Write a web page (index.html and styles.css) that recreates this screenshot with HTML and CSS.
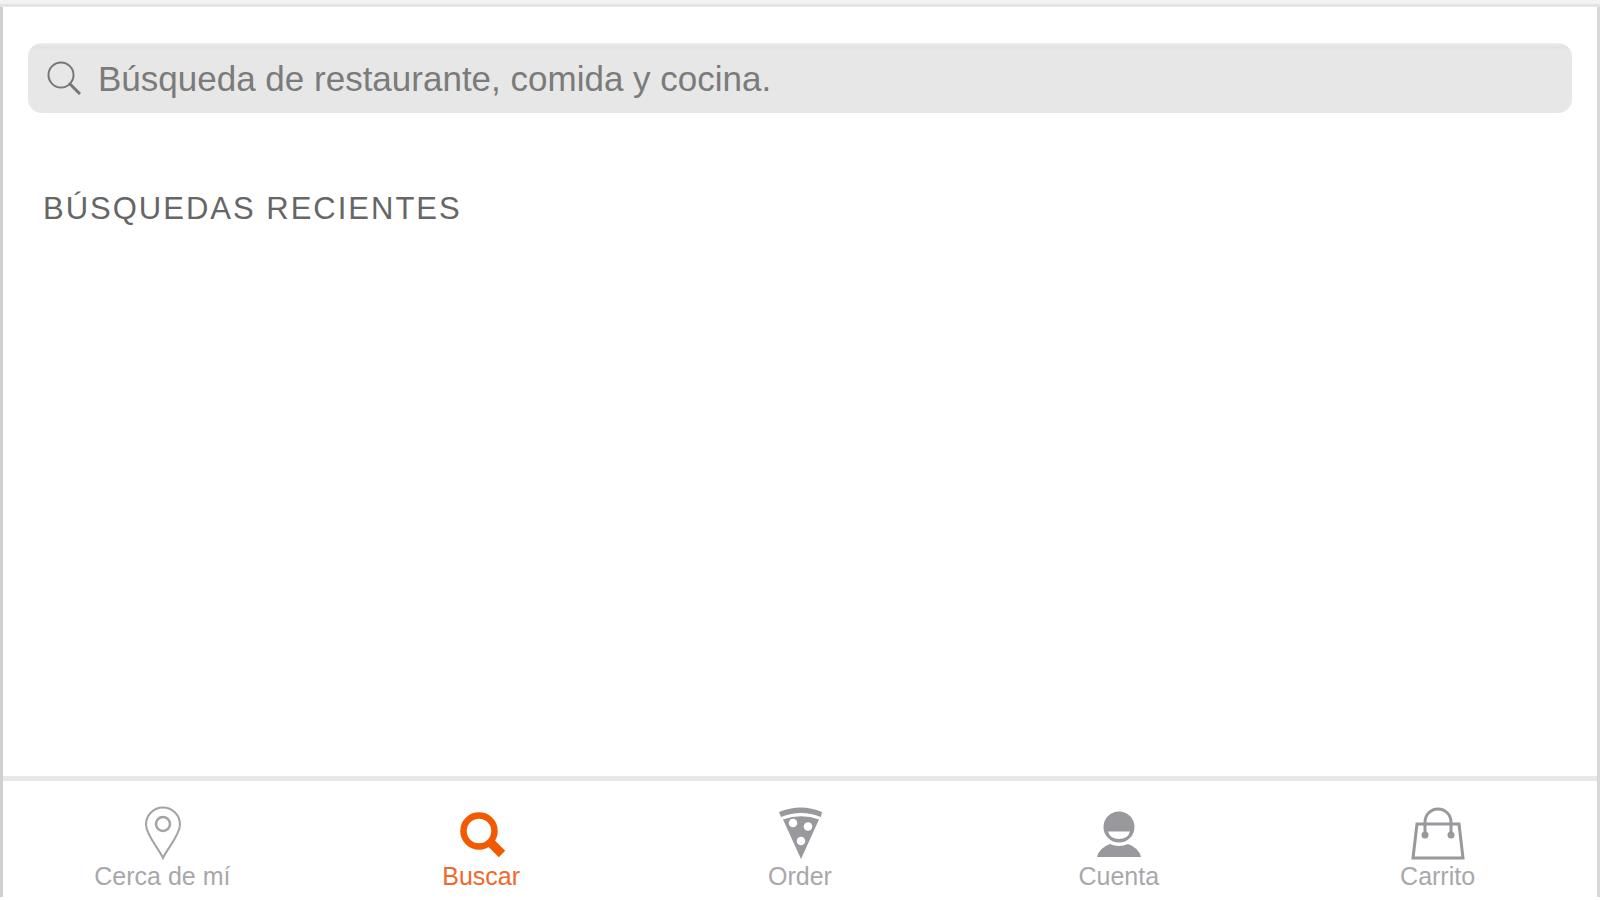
FILE: index.html
```html
<!DOCTYPE html>
<html lang="es">
<head>
  <meta charset="utf-8">
  <meta name="viewport" content="width=device-width, initial-scale=1">
  <title>Buscar</title>
  <link rel="stylesheet" href="styles.css">
</head>
<body>

<div class="app">

  <main class="content">
    <form class="search" role="search">
      <label class="search-label" for="search-input" aria-label="Buscar">
        <svg class="search-icon" viewBox="0 0 34 34">
          <circle cx="14" cy="14" r="12.5" fill="none" stroke="#777" stroke-width="2"/>
          <path d="M22 22L33 33" stroke="#777" stroke-width="3"/>
        </svg>
      </label>
      <input class="search-input" id="search-input" type="text" placeholder="Búsqueda de restaurante, comida y cocina.">
    </form>

    <h2 class="recent-title">BÚSQUEDAS RECIENTES</h2>
  </main>

  <nav class="tabs">
    <a class="tab" href="#cerca">
      <svg class="tab-icon" viewBox="0 0 54 54">
        <path d="M28 52C24 43 11 29 11 18.500A17 17 0 0 1 45 18.500C45 29 32 43 28 52Z" fill="none" stroke="#a3a3a6" stroke-width="2"/>
        <circle cx="28" cy="18" r="7" fill="none" stroke="#a3a3a6" stroke-width="2.500"/>
      </svg>
      <span>Cerca de mí</span>
    </a>

    <a class="tab tab-active" href="#buscar">
      <svg class="tab-icon" viewBox="0 0 54 54">
        <circle cx="25" cy="25" r="15.500" fill="none" stroke="#f15a00" stroke-width="6.500"/>
        <path d="M34 34L48 48" stroke="#f15a00" stroke-width="9"/>
      </svg>
      <span>Buscar</span>
    </a>

    <a class="tab" href="#order">
      <svg class="tab-icon" viewBox="0 0 54 54">
        <path d="M6 6Q28 -3 49 6L48 11Q28 3 8 11Z" fill="#98989d"/>
        <path d="M10 13.500Q28 7 46 13.500L28 53Z" fill="#98989d"/>
        <circle cx="20" cy="17" r="4.300" fill="#fff"/>
        <circle cx="35" cy="20.500" r="4.300" fill="#fff"/>
        <circle cx="28" cy="35" r="4.300" fill="#fff"/>
      </svg>
      <span>Order</span>
    </a>

    <a class="tab" href="#cuenta">
      <svg class="tab-icon" viewBox="0 0 54 54">
        <circle cx="27" cy="21" r="15.500" fill="#98989d"/>
        <path d="M16 25.500H38Q36 33 27 33Q18 33 16 25.500Z" fill="#fff"/>
        <path d="M5 51Q7 42 18 38Q27 42 36 38Q47 42 49 51Z" fill="#98989d"/>
      </svg>
      <span>Cuenta</span>
    </a>

    <a class="tab" href="#carrito">
      <svg class="tab-icon" viewBox="0 0 54 54">
        <path d="M6 18H48L52 52H2Z" fill="none" stroke="#98989d" stroke-width="3"/>
        <path d="M14 29V16A13 13 0 0 1 40 16V29" fill="none" stroke="#98989d" stroke-width="3"/>
        <circle cx="14" cy="29" r="3.500" fill="#98989d"/>
        <circle cx="40" cy="29" r="3.500" fill="#98989d"/>
      </svg>
      <span>Carrito</span>
    </a>
  </nav>

</div>

</body>
</html>
```
FILE: styles.css
```css
* {
    box-sizing: border-box;
}
body {
    margin: 0;
    padding-bottom: 3px;
    background-color: #fff;
    font-family: "Liberation Sans", Arial, sans-serif;
}
.app {
    display: flex;
    flex-direction: column;
    min-height: calc(100vh - 3px);
    border-left: 3px solid #d0d0d0;
    border-right: 3px solid #d8d8d8;
}
.app:before {
    content: "";
    height: 7px;
    margin: 0 -3px;
    background: linear-gradient(#f3f3f3 45%, #dedede 75%, #ececec);
}
.content {
    flex: 1;
    padding: 36px 25px;
}
.search {
    display: flex;
    align-items: center;
    height: 70px;
    padding-left: 19px;
    border-radius: 14px;
    background: linear-gradient(#f0f0f0, #e2e2e2 4px, #e7e7e7 7px);
}
.search-label {
    display: flex;
}
.search-icon {
    width: 34px;
    height: 34px;
}
.search-input {
    flex: 1;
    min-width: 0;
    height: 100%;
    margin-left: 17px;
    padding: 2px 0 0;
    border: 0;
    outline: 0;
    background: none;
    color: #777;
    font-family: inherit;
    font-size: 35px;
}
.search-input::placeholder {
    color: #7b7b7b;
    opacity: 1;
}
.recent-title {
    margin: 78px 15px 0;
    color: #666;
    font-size: 31px;
    font-weight: normal;
    line-height: 36px;
    letter-spacing: 2px;
}
.tabs {
    display: flex;
    padding: 25px 0 7px;
    border-top: 5px solid #e8e8e8;
}
.tab {
    display: flex;
    flex: 1;
    flex-direction: column;
    align-items: center;
    gap: 2px;
    color: #a8a8ab;
    font-size: 25px;
    line-height: 28px;
    text-decoration: none;
}
.tab-icon {
    width: 54px;
    height: 54px;
}
.tab-active {
    color: #f0692b;
}
```
